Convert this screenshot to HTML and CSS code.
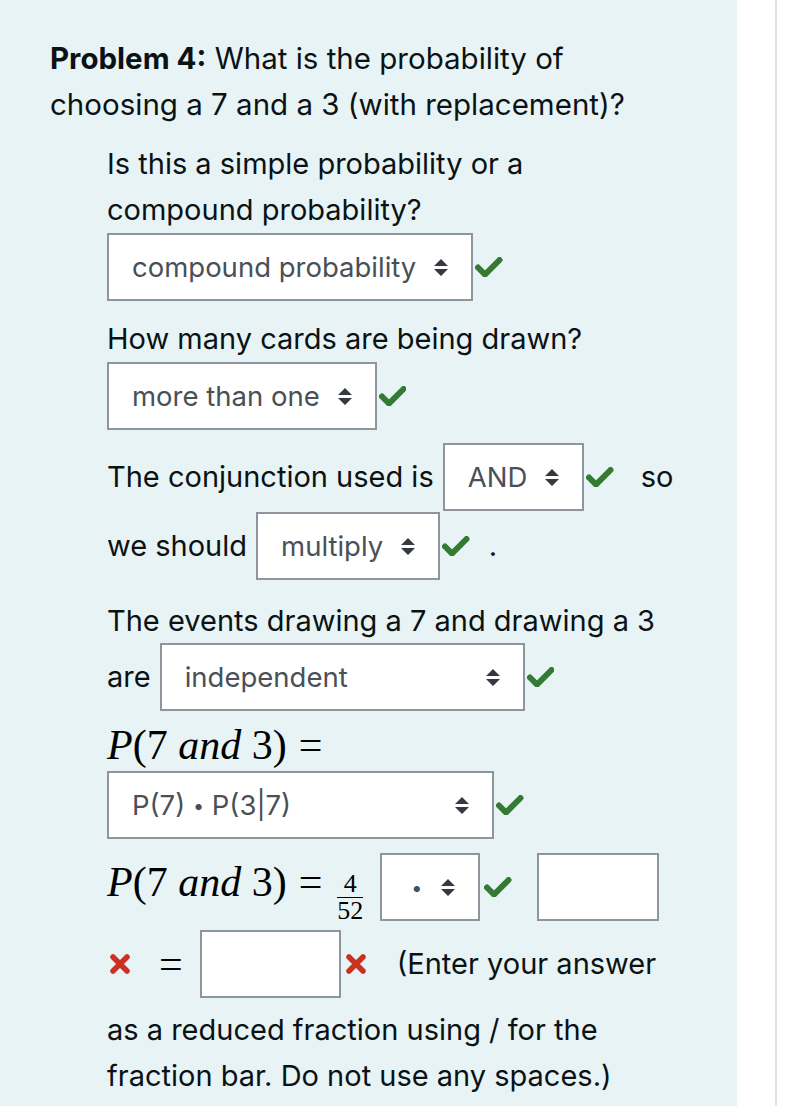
FILE: index.html
```html
<!DOCTYPE html>
<html lang="en">
<head>
<meta charset="utf-8">
<title>Problem 4</title>
<link rel="stylesheet" href="styles.css">
</head>
<body>
<div class="screen">
  <main class="formulation">
    <p class="qtext"><span class="qline"><strong>Problem 4:</strong> What is the probability of</span><span class="qline">choosing a 7 and a 3 (with replacement)?</span></p>
    <div class="parts">
      <p class="line">Is this a simple probability or a<br>compound probability?</p>
      <div class="row">
        <span class="select"><span class="val">compound probability</span><svg class="arrows" viewBox="0 0 14 17"><path d="M0 7L7 0L14 7Z M0 10L14 10L7 17Z"/></svg></span>
        <svg class="check" viewBox="0 0 27.5 20.5"><path d="M3 10.5L10 17.5L24.5 3"/></svg>
      </div>
      <p class="line mt-15">How many cards are being drawn?</p>
      <div class="row">
        <span class="select"><span class="val">more than one</span><svg class="arrows" viewBox="0 0 14 17"><path d="M0 7L7 0L14 7Z M0 10L14 10L7 17Z"/></svg></span>
        <svg class="check" viewBox="0 0 27.5 20.5"><path d="M3 10.5L10 17.5L24.5 3"/></svg>
      </div>
      <div class="row mt-13">
        <span>The conjunction used is</span>
        <span class="select"><span class="val">AND</span><svg class="arrows" viewBox="0 0 14 17"><path d="M0 7L7 0L14 7Z M0 10L14 10L7 17Z"/></svg></span>
        <svg class="check" viewBox="0 0 27.5 20.5"><path d="M3 10.5L10 17.5L24.5 3"/></svg>
        <span class="after-so">so</span>
      </div>
      <div class="row mt-1">
        <span>we should</span>
        <span class="select"><span class="val">multiply</span><svg class="arrows" viewBox="0 0 14 17"><path d="M0 7L7 0L14 7Z M0 10L14 10L7 17Z"/></svg></span>
        <svg class="check" viewBox="0 0 27.5 20.5"><path d="M3 10.5L10 17.5L24.5 3"/></svg>
        <span class="after-dot">.</span>
      </div>
      <p class="line mt-18">The events drawing a 7 and drawing a 3</p>
      <div class="row mt-n1">
        <span>are</span>
        <span class="select w-indep"><span class="val">independent</span><svg class="arrows" viewBox="0 0 14 17"><path d="M0 7L7 0L14 7Z M0 10L14 10L7 17Z"/></svg></span>
        <svg class="check" viewBox="0 0 27.5 20.5"><path d="M3 10.5L10 17.5L24.5 3"/></svg>
      </div>
      <div class="math math-line"><i>P</i>(7 <i>and</i> 3)<span class="eq">=</span></div>
      <div class="row">
        <span class="select w-formula"><span class="val">P(7) <span class="bullet">•</span> P(3|7)</span><svg class="arrows" viewBox="0 0 14 17"><path d="M0 7L7 0L14 7Z M0 10L14 10L7 17Z"/></svg></span>
        <svg class="check" viewBox="0 0 27.5 20.5"><path d="M3 10.5L10 17.5L24.5 3"/></svg>
      </div>
      <div class="row mt-14">
        <span class="math lifted"><i>P</i>(7 <i>and</i> 3)<span class="eq">=</span></span>
        <span class="frac"><span class="num">4</span><span class="den">52</span></span>
        <span class="select w-op"><span class="val op-val"><span class="bullet">•</span></span><svg class="arrows" viewBox="0 0 14 17"><path d="M0 7L7 0L14 7Z M0 10L14 10L7 17Z"/></svg></span>
        <svg class="check" viewBox="0 0 27.5 20.5"><path d="M3 10.5L10 17.5L24.5 3"/></svg>
        <span class="input w-small"></span>
      </div>
      <div class="row mt-9">
        <svg class="cross" viewBox="0 0 22 22"><path d="M4 4L18 18M18 4L4 18"/></svg>
        <span class="math eq-only">=</span>
        <span class="input w-answer"></span>
        <svg class="cross after-input" viewBox="0 0 22 22"><path d="M4 4L18 18M18 4L4 18"/></svg>
        <span class="hint">(Enter your answer</span>
      </div>
      <p class="line mt-9">as a reduced fraction using / for the<br>fraction bar. Do not use any spaces.)</p>
    </div>
  </main>
  <div class="gutter"></div>
  <div class="rule"></div>
</div>
</body>
</html>
```
FILE: styles.css
```css
html, body {
  margin: 0;
  padding: 0;
  background: #ffffff;
}
body {
  font-family: Inter, "Noto Sans", sans-serif;
}
.screen {
  display: flex;
  min-height: 1106px;
}
.formulation {
  flex: none;
  width: 737px;
  box-sizing: border-box;
  background: #e7f3f5;
  padding: 35px 0 0 50px;
  color: #0b1214;
  font-size: 29px;
  line-height: 46px;
}
.gutter {
  flex: none;
  width: 38px;
}
.rule {
  flex: none;
  width: 2px;
  background: #e2e2e2;
}
p {
  margin: 0;
}
.qtext {
  font-size: 29.5px;
}
.qline {
  display: block;
}
.qtext strong {
  font-weight: 700;
}
.parts {
  margin: 14px 0 0 57px;
}
.row {
  display: flex;
  align-items: center;
  white-space: nowrap;
}
.mt-n1 { margin-top: -1px; }
.mt-1 { margin-top: 1px; }
.mt-9 { margin-top: 9px; }
.mt-13 { margin-top: 13px; }
.mt-14 { margin-top: 14px; }
.mt-15 { margin-top: 15px; }
.mt-18 { margin-top: 18px; }

.select {
  display: inline-flex;
  align-items: center;
  justify-content: space-between;
  gap: 18px;
  height: 68px;
  box-sizing: border-box;
  border: 2px solid #8f959e;
  background: #ffffff;
  padding: 0 23px;
  color: #495057;
  font-size: 27.5px;
}
.row > span + .select {
  margin-left: 9px;
}
.w-indep { width: 365px; }
.w-formula { width: 387px; }
.w-op { width: 100px; }
.bullet {
  font-size: 0.72em;
  vertical-align: 0.12em;
}
.op-val {
  padding-left: 6px;
}
.arrows {
  flex: none;
  width: 14px;
  height: 17px;
  fill: #343a40;
}
.check {
  flex: none;
  width: 27.5px;
  height: 20.5px;
  margin-left: 2px;
  fill: none;
  stroke: #357a32;
  stroke-width: 6;
  stroke-linecap: round;
  stroke-linejoin: miter;
}
.after-so {
  margin-left: 27px;
}
.after-dot {
  margin-left: 19px;
}
.input {
  display: inline-block;
  height: 68px;
  box-sizing: border-box;
  border: 2px solid #8f959e;
  background: #ffffff;
}
.w-small {
  width: 122px;
  margin-left: 25px;
}
.w-answer {
  width: 141px;
  margin-left: 17px;
}
.cross {
  flex: none;
  width: 22px;
  height: 22px;
  margin-left: 2px;
  fill: none;
  stroke: #ca3120;
  stroke-width: 5.5;
  stroke-linecap: round;
}
.cross.after-input {
  margin-left: 4px;
}
.hint {
  margin-left: 30px;
}

.math {
  font-family: "Liberation Serif", "DejaVu Serif", serif;
  font-size: 42px;
  line-height: normal;
  color: #000;
}
.math i {
  font-style: italic;
}
.math .eq {
  margin-left: 12px;
}
.math-line {
  margin-top: 8px;
  line-height: 52px;
  height: 52px;
}
.lifted {
  margin: -5px 0 5px;
}
.eq-only {
  margin-left: 28px;
}
.frac {
  display: inline-flex;
  flex-direction: column;
  align-items: center;
  margin: 10px 0 -10px 15px;
  font-family: "Liberation Serif", "DejaVu Serif", serif;
  font-size: 26px;
  line-height: 1;
  color: #000;
}
.frac .num {
  align-self: stretch;
  text-align: center;
  padding: 0 2px 0;
  border-bottom: 1.5px solid #000;
}
.row > .frac + .select {
  margin-left: 17px;
}
.w-op + .check {
  margin-left: 4px;
}
```
